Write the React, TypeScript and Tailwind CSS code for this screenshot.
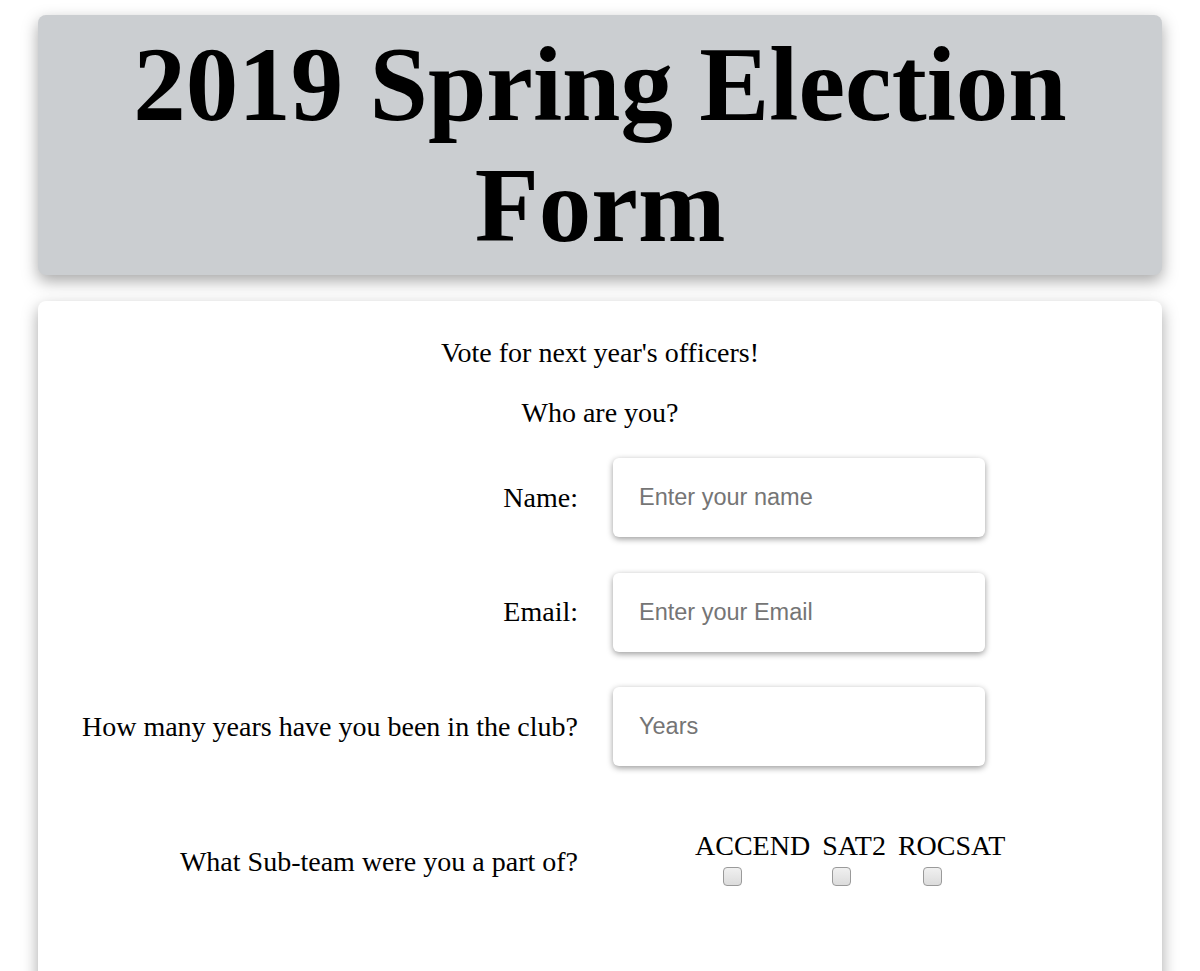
export default function App() {
  const fields = [
    { label: "Name:", placeholder: "Enter your name" },
    { label: "Email:", placeholder: "Enter your Email" },
    { label: "How many years have you been in the club?", placeholder: "Years" },
  ];

  const teams = [
    { name: "ACCEND", offset: "ml-[28px]" },
    { name: "SAT2", offset: "ml-[10px]" },
    { name: "ROCSAT", offset: "ml-[25px]" },
  ];

  return (
    <div className="min-h-screen bg-white px-[38px] pt-[15px] pb-10 font-['Liberation_Serif',serif] text-black">
      {/* Header */}
      <div className="rounded-lg bg-[#cbced1] py-[9px] shadow-[0_6px_16px_rgba(0,0,0,0.35)]">
        <h1 className="text-center text-[105px] leading-[121px] font-bold">
          2019 Spring Election Form
        </h1>
      </div>

      {/* Form card */}
      <div className="mt-[26px] min-h-[720px] rounded-lg bg-white pt-[36px] shadow-[0_6px_16px_rgba(0,0,0,0.35)]">
        <p className="text-center text-[28px] leading-[32px]">
          Vote for next year's officers!
        </p>
        <p className="mt-[28px] text-center text-[28px] leading-[32px]">
          Who are you?
        </p>

        <div className="mt-[29px] grid grid-cols-[540px_372px] gap-x-[35px] gap-y-[35.5px]">
          {fields.map((f) => (
            <div key={f.label} className="contents">
              <label className="self-center text-right text-[28px] leading-[32px]">
                {f.label}
              </label>
              <input
                placeholder={f.placeholder}
                className="h-[79px] w-[372px] rounded-md bg-white px-[26px] font-['Liberation_Sans',Arial,sans-serif] text-[23.5px] shadow-[0_2px_6px_rgba(0,0,0,0.4)] outline-none placeholder:text-[#757575]"
              />
            </div>
          ))}

          <label className="mt-[28px] self-center pt-[8px] text-right text-[28px] leading-[32px]">
            What Sub-team were you a part of?
          </label>
          <div className="mt-[28px] ml-[82px] flex gap-[12px]">
            {teams.map((t) => (
              <div key={t.name} className="flex flex-col">
                <span className="text-[28px] leading-[32px] whitespace-nowrap">
                  {t.name}
                </span>
                <span
                  className={`${t.offset} mt-[5px] block h-[19px] w-[19px] rounded-[4px] border border-[#9a9a9a] bg-gradient-to-b from-[#f0f0f0] to-[#dcdcdc]`}
                />
              </div>
            ))}
          </div>
        </div>
      </div>
    </div>
  );
}
